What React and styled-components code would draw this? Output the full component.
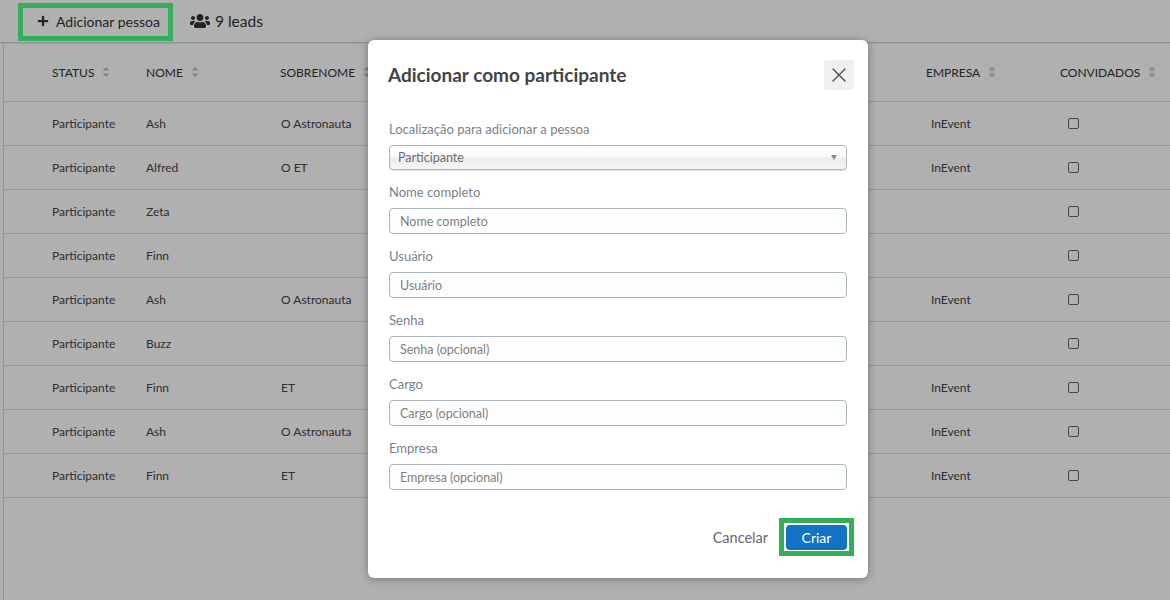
import React from 'react'
import styled, { createGlobalStyle } from 'styled-components'
import { FaPlus, FaUsers } from 'react-icons/fa'
import { FiX } from 'react-icons/fi'

const Global = createGlobalStyle`
  html, body { margin: 0; padding: 0; background: #fff; }
  body { font-family: Lato, "Liberation Sans", sans-serif; color: #333; }
  * { box-sizing: border-box; }
`

const Page = styled.div`
  position: relative;
  width: 1170px;
  height: 600px;
  overflow: hidden;
`

const Toolbar = styled.div`
  display: flex;
  align-items: center;
  height: 43px;
  padding: 0 0 0 37px;
  border-bottom: 1px solid #cfcfcf;
  box-shadow: 0 1px 2px rgba(0, 0, 0, 0.1);
`

const AddButton = styled.div`
  display: flex;
  align-items: center;
  gap: 7px;
  width: 153px;
  font-size: 14px;
  color: #333;
`

const Leads = styled.div`
  display: flex;
  align-items: center;
  gap: 5px;
  font-size: 15.5px;
  color: #333;
`

const TableWrap = styled.div`
  margin-left: 3px;
  height: 557px;
  border-left: 1px solid #d8d8d8;
`

const Row = styled.div`
  display: grid;
  grid-template-columns: 48px 94px 134px 646px 134px 1fr;
  align-items: center;
  height: ${p => (p.$head ? '59px' : '44px')};
  border-bottom: 1px solid #dcdcdc;
  font-size: 12px;
  color: #444;
`

const HeadCell = styled.div`
  display: flex;
  align-items: center;
  gap: 8px;
  font-size: 12px;
  color: #333;
`

const SortSvg = styled.svg`
  width: 8px;
  height: 12px;
  color: #c4c4c4;
`

const SortIcon = () => (
  <SortSvg viewBox="0 0 8 12">
    <path d="M4 0.5 L7.5 4.5 H0.5 Z M4 11.5 L0.5 7.5 H7.5 Z" fill="currentColor" />
  </SortSvg>
)

const Cell = styled.div`
  padding-left: ${p => p.$inset || 0}px;
`

const Check = styled.div`
  width: 11px;
  height: 11px;
  margin-left: 8px;
  border: 1.5px solid #666;
  border-radius: 2px;
`

const Overlay = styled.div`
  position: absolute;
  inset: 0;
  background: rgba(0, 0, 0, 0.31);
`

const Modal = styled.div`
  position: absolute;
  left: 368px;
  top: 40px;
  width: 500px;
  height: 538px;
  padding: 20px 21px 0 21px;
  background: #fff;
  border-radius: 6px;
  box-shadow: 0 1px 8px rgba(0, 0, 0, 0.35);
  display: flex;
  flex-direction: column;
`

const ModalHead = styled.div`
  display: flex;
  align-items: center;
  justify-content: space-between;
  height: 30px;
  margin: 0 -7px 30px -1px;
`

const Title = styled.h2`
  margin: -2px 0 0;
  font-size: 19px;
  font-weight: 700;
  color: #444;
`

const CloseBtn = styled.div`
  display: flex;
  align-items: center;
  justify-content: center;
  width: 30px;
  height: 30px;
  background: #f0f0f0;
  border-radius: 3px;
  color: #555;
`

const Field = styled.div`
  display: flex;
  flex-direction: column;
  margin-bottom: 13px;
`

const Label = styled.label`
  height: 25px;
  line-height: 18px;
  font-size: 13px;
  color: #76828a;
`

const Input = styled.div`
  display: flex;
  align-items: center;
  height: 26px;
  padding: 0 10px;
  border: 1px solid #a9b7bd;
  border-radius: 4px;
  background: #fdfdfd;
  font-size: 12.5px;
  color: #808080;
`

const Select = styled(Input)`
  height: 25px;
  justify-content: space-between;
  padding: 0 9px 0 8px;
  color: #6c6c6c;
  background: linear-gradient(#fff 0%, #fafafa 45%, #ececec 55%, #f6f6f6 100%);
  box-shadow: 0 1px 1px rgba(0, 0, 0, 0.12);
  &::after {
    content: '';
    border-left: 3.5px solid transparent;
    border-right: 3.5px solid transparent;
    border-top: 5px solid #888;
    margin: 0 0 1px;
  }
`

const Footer = styled.div`
  display: flex;
  justify-content: flex-end;
  align-items: center;
  gap: 18px;
  margin-top: 22px;
`

const Cancel = styled.div`
  font-size: 14.5px;
  color: #666;
`

const Create = styled.div`
  display: flex;
  align-items: center;
  justify-content: center;
  width: 61px;
  height: 25px;
  background: #1272c4;
  border-radius: 4px;
  color: #fff;
  font-size: 14px;
`

const Highlight = styled.div`
  position: absolute;
  left: ${p => p.$x}px;
  top: ${p => p.$y}px;
  width: ${p => p.$w}px;
  height: 38px;
  border: 5px solid #35ae5b;
`

const columns = ['STATUS', 'NOME', 'SOBRENOME', 'EMPRESA', 'CONVIDADOS']

const people = [
  ['Ash', 'O Astronauta', 'InEvent'],
  ['Alfred', 'O ET', 'InEvent'],
  ['Zeta', '', ''],
  ['Finn', '', ''],
  ['Ash', 'O Astronauta', 'InEvent'],
  ['Buzz', '', ''],
  ['Finn', 'ET', 'InEvent'],
  ['Ash', 'O Astronauta', 'InEvent'],
  ['Finn', 'ET', 'InEvent']
]

const fields = [
  ['Nome completo', 'Nome completo'],
  ['Usuário', 'Usuário'],
  ['Senha', 'Senha (opcional)'],
  ['Cargo', 'Cargo (opcional)'],
  ['Empresa', 'Empresa (opcional)']
]

const App = () => (
  <Page>
    <Global />
    <Toolbar>
      <AddButton><FaPlus size={12} /> Adicionar pessoa</AddButton>
      <Leads><FaUsers size={20} /> 9 leads</Leads>
    </Toolbar>
    <TableWrap>
      <Row $head>
        <div />
        {columns.map(c => (
          <HeadCell key={c}>{c} <SortIcon /></HeadCell>
        ))}
      </Row>
      {people.map(([name, last, company], i) => (
        <Row key={i}>
          <div />
          <Cell>Participante</Cell>
          <Cell>{name}</Cell>
          <Cell $inset={1}>{last}</Cell>
          <Cell $inset={5}>{company}</Cell>
          <Check />
        </Row>
      ))}
    </TableWrap>
    <Overlay />
    <Highlight $x={18} $y={3} $w={155} />
    <Modal>
      <ModalHead>
        <Title>Adicionar como participante</Title>
        <CloseBtn><FiX size={24} strokeWidth={1.5} /></CloseBtn>
      </ModalHead>
      <Field>
        <Label>Localização para adicionar a pessoa</Label>
        <Select>Participante</Select>
      </Field>
      {fields.map(([label, hint]) => (
        <Field key={label}>
          <Label>{label}</Label>
          <Input>{hint}</Input>
        </Field>
      ))}
      <Footer>
        <Cancel>Cancelar</Cancel>
        <Create>Criar</Create>
      </Footer>
    </Modal>
    <Highlight $x={779} $y={518} $w={75} />
  </Page>
)

export default App
